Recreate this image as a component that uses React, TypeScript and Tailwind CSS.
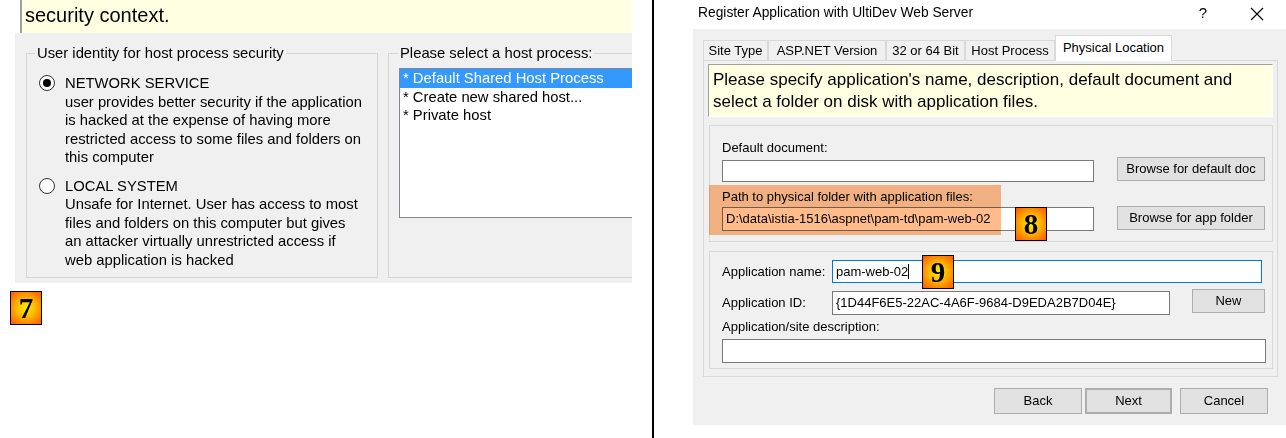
import React from "react"

const Badge = ({ n }: { n: string }) => (
  <div className="w-[32px] h-[34px] border border-black bg-[radial-gradient(circle,#fff200_0%,#ffb400_45%,#ff5400_100%)] flex items-center justify-center font-['Liberation_Serif',serif] font-bold text-[29px] leading-none text-black">
    {n}
  </div>
)

const Btn = ({ children, className = "" }: { children: React.ReactNode; className?: string }) => (
  <div className={"flex items-center justify-center bg-[#e1e1e1] border border-[#adadad] text-[13px] text-black shrink-0 " + className}>
    {children}
  </div>
)

const Field = ({ children, className = "" }: { children?: React.ReactNode; className?: string }) => (
  <div className={"flex items-center bg-white border border-[#7a7a7a] pl-[3px] text-[13px] text-black shrink-0 " + className}>
    {children}
  </div>
)

const Radio = ({ checked }: { checked?: boolean }) => (
  <div className="w-[16px] h-[16px] rounded-full border border-[#333] bg-white flex items-center justify-center shrink-0 mt-[1px]">
    {checked && <div className="w-[8px] h-[8px] rounded-full bg-black" />}
  </div>
)

const Left = () => (
  <div className="w-[632px] shrink-0 flex flex-col">
    <div className="ml-[20px] h-[33px] bg-[#ffffe1] border-l-2 border-[#a0a0a0] pl-[3px] pt-[2px] text-[20px] leading-[26px] text-black">
      security context.
    </div>
    <div className="ml-[15px] h-[250px] bg-[#f0f0f0] overflow-hidden flex gap-[10px] pl-[11px] pt-[11px] text-[14.8px]">
      <fieldset className="w-[352px] h-[234px] shrink-0 border border-[#d5d5d5]">
        <legend className="ml-[8px] px-[2px] leading-[18px]">User identity for host process security</legend>
        <div className="px-[12px]">
          <div className="flex gap-[10px] mt-[12px] leading-[18.5px]">
            <Radio checked />
            <div>
              <div>NETWORK SERVICE</div>
              <div>user provides better security if the application</div>
              <div>is hacked at the expense of having more</div>
              <div>restricted access to some files and folders on</div>
              <div>this computer</div>
            </div>
          </div>
          <div className="flex gap-[10px] mt-[10px] leading-[18.5px]">
            <Radio />
            <div>
              <div>LOCAL SYSTEM</div>
              <div>Unsafe for Internet. User has access to most</div>
              <div>files and folders on this computer but gives</div>
              <div>an attacker virtually unrestricted access if</div>
              <div>web application is hacked</div>
            </div>
          </div>
        </div>
      </fieldset>
      <fieldset className="w-[300px] h-[234px] shrink-0 border border-[#d5d5d5]">
        <legend className="ml-[9px] px-[2px] leading-[18px]">Please select a host process:</legend>
        <div className="px-[10px]">
          <div className="mt-[6px] w-[280px] h-[150px] bg-white border border-[#828790] leading-[18.5px]">
            <div className="bg-[#3399ff] text-white pl-[3px]">* Default Shared Host Process</div>
            <div className="pl-[3px]">* Create new shared host...</div>
            <div className="pl-[3px]">* Private host</div>
          </div>
        </div>
      </fieldset>
    </div>
    <div className="ml-[10px] mt-[8px]">
      <Badge n="7" />
    </div>
  </div>
)

const tabs = [
  { label: "Site Type", w: "w-[65px]" },
  { label: "ASP.NET Version", w: "w-[118px]" },
  { label: "32 or 64 Bit", w: "w-[79px]" },
  { label: "Host Process", w: "w-[90px]" },
]

const Dialog = () => (
  <div className="ml-[39px] w-[593px] shrink-0 flex flex-col">
    <div className="h-[29px] flex items-center pb-[2px] pl-[5px] pr-[6px] text-[13.8px] text-black">
      <span>Register Application with UltiDev Web Server</span>
      <span className="ml-auto w-[46px] text-center text-[15px]">?</span>
      <span className="ml-[8px] w-[46px] flex justify-center">
        <svg width="14" height="14" viewBox="0 0 14 14">
          <path d="M1 1L13 13M13 1L1 13" stroke="#000" strokeWidth="1.2" />
        </svg>
      </span>
    </div>
    <div className="h-[396px] bg-[#f0f0f0] pl-[10px] pt-[6px] flex flex-col">
      <div className="h-[25px] flex items-end text-[13px] text-black">
        {tabs.map(t => (
          <div key={t.label} className={"h-[20px] border border-b-0 border-[#d9d9d9] bg-[#f0f0f0] flex items-center justify-center " + t.w}>
            {t.label}
          </div>
        ))}
        <div className="w-[117px] h-[26px] -mb-px relative z-10 border border-b-0 border-[#d9d9d9] bg-white flex items-center justify-center pb-[2px]">
          Physical Location
        </div>
      </div>
      <div className="w-[575px] h-[317px] border border-[#d9d9d9] bg-[#f0f0f0] px-[4px] pt-[3px]">
        <div className="w-[565px] h-[53px] bg-[#ffffe1] border-t border-l border-[#a0a0a0] border-r border-b border-r-white border-b-white px-[4px] pt-[4px] text-[17px] leading-[22px] text-black">
          <div>Please specify application's name, description, default document and</div>
          <div>select a folder on disk with application files.</div>
        </div>

        <div className="relative ml-[1px] mt-[8px] w-[564px] h-[117px] border border-[#d8d8d8] pl-[12px] pt-[14px] text-[13px] text-black">
          <div className="leading-[16px]">Default document:</div>
          <div className="flex items-start mt-[1px]">
            <Field className="w-[372px] h-[22px] mt-[3px]" />
            <Btn className="ml-[23px] w-[148px] h-[24px]">Browse for default doc</Btn>
          </div>
          <div className="leading-[16px] mt-[7px]">Path to physical folder with application files:</div>
          <div className="flex items-start mt-[1px]">
            <Field className="w-[372px] h-[24px] mt-[1px]">D:\data\istia-1516\aspnet\pam-td\pam-web-02</Field>
            <Btn className="ml-[23px] w-[148px] h-[24px]">Browse for app folder</Btn>
          </div>
          <div className="absolute left-[-1px] top-[59px] w-[292px] h-[50px] bg-[#ffbb8a] mix-blend-multiply" />
          <div className="absolute left-[305px] top-[81px]">
            <Badge n="8" />
          </div>
        </div>

        <div className="relative ml-[1px] mt-[9px] w-[564px] h-[118px] border border-[#d8d8d8] pl-[12px] pt-[8px] text-[13px] text-black">
          <div className="flex items-center">
            <div className="w-[110px]">Application name:</div>
            <div className="w-[430px] h-[23px] bg-white border border-[#0078d7] pl-[3px] flex items-center">
              pam-web-02<span className="w-px h-[15px] bg-black" />
            </div>
          </div>
          <div className="flex items-center mt-[8px]">
            <div className="w-[110px]">Application ID:</div>
            <Field className="w-[338px] h-[24px]">{"{1D44F6E5-22AC-4A6F-9684-D9EDA2B7D04E}"}</Field>
            <Btn className="ml-[22px] w-[73px] h-[24px] -mt-[4px]">New</Btn>
          </div>
          <div className="leading-[16px] mt-[4px]">Application/site description:</div>
          <Field className="w-[544px] h-[24px] mt-[4px]" />
          <div className="absolute left-[212px] top-[3px]">
            <Badge n="9" />
          </div>
        </div>
      </div>
      <div className="flex justify-end pr-[18px] mt-[11px]">
        <Btn className="w-[88px] h-[26px]">Back</Btn>
        <Btn className="ml-[3px] w-[87px] h-[26px] border-2 border-[#0078d7]">Next</Btn>
        <Btn className="ml-[8px] w-[88px] h-[26px]">Cancel</Btn>
      </div>
    </div>
  </div>
)

export default function App() {
  return (
    <div className="w-[1286px] h-[438px] bg-white flex overflow-hidden font-['Liberation_Sans',Arial,sans-serif] text-black">
      <Left />
      <div className="ml-[20px] w-[2px] h-full bg-black shrink-0" />
      <Dialog />
    </div>
  )
}
